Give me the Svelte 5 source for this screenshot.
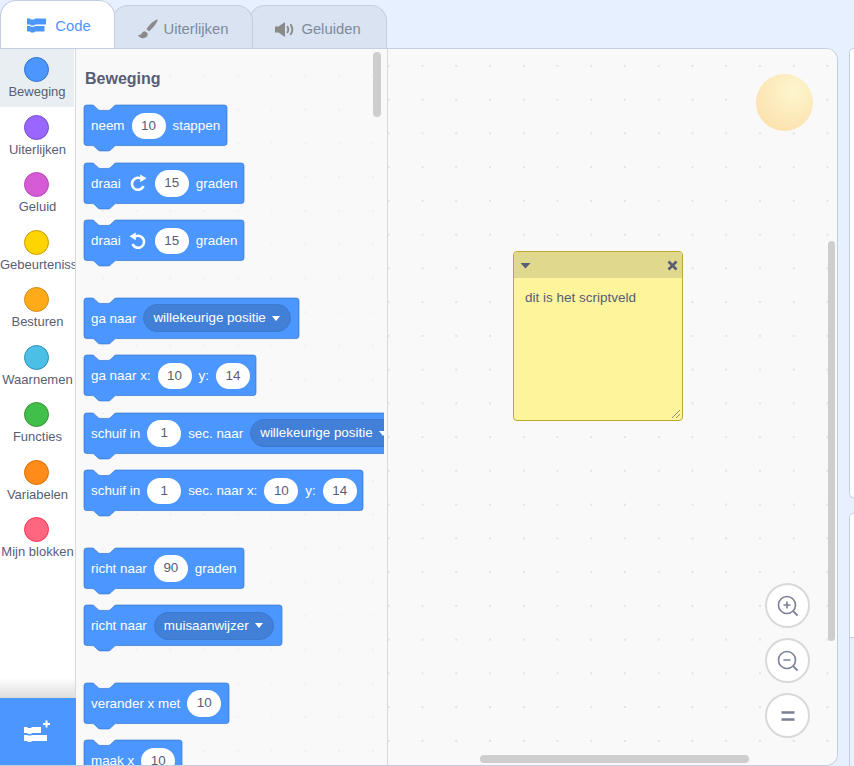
<script>
  const cats = [
    { name: 'Beweging', color: '#4c97ff', line: '#3373cc', active: true },
    { name: 'Uiterlijken', color: '#9966ff', line: '#774dcb' },
    { name: 'Geluid', color: '#d65cd6', line: '#bd42bd' },
    { name: 'Gebeurtenissen', color: '#ffd500', line: '#cc9900' },
    { name: 'Besturen', color: '#ffab19', line: '#cf8b17' },
    { name: 'Waarnemen', color: '#4cbfe6', line: '#2e8eb8' },
    { name: 'Functies', color: '#40bf4a', line: '#389438' },
    { name: 'Variabelen', color: '#ff8c1a', line: '#db6e00' },
    { name: 'Mijn blokken', color: '#ff6680', line: '#ff3355' }
  ]

  // t = text, n = number pill, d = dropdown, cw / ccw = turn icons
  const blocks = [
    { w: 143, parts: [['t', 'neem'], ['n', '10'], ['t', 'stappen']] },
    { w: 160, parts: [['t', 'draai'], ['cw'], ['n', '15'], ['t', 'graden']] },
    { w: 160, parts: [['t', 'draai'], ['ccw'], ['n', '15'], ['t', 'graden']], end: true },
    { w: 215, parts: [['t', 'ga naar'], ['d', 'willekeurige positie']] },
    { w: 172, parts: [['t', 'ga naar x:'], ['n', '10'], ['t', 'y:'], ['n', '14']] },
    { w: 330, parts: [['t', 'schuif in'], ['n', '1'], ['t', 'sec. naar'], ['d', 'willekeurige positie']] },
    { w: 279, parts: [['t', 'schuif in'], ['n', '1'], ['t', 'sec. naar x:'], ['n', '10'], ['t', 'y:'], ['n', '14']], end: true },
    { w: 160, parts: [['t', 'richt naar'], ['n', '90'], ['t', 'graden']] },
    { w: 198, parts: [['t', 'richt naar'], ['d', 'muisaanwijzer']], end: true },
    { w: 145, parts: [['t', 'verander x met'], ['n', '10']] },
    { w: 98, parts: [['t', 'maak x'], ['n', '10']] }
  ]

  function shape(w) {
    const W = w / 0.675
    return `M0 4A4 4 0 0 1 4 0H12c2 0 3 1 4 2l4 4c1 1 2 2 4 2h12c2 0 3-1 4-2l4-4c1-1 2-2 4-2H${W - 4}a4 4 0 0 1 4 4v52a4 4 0 0 1-4 4H48c-2 0-3 1-4 2l-4 4c-1 1-2 2-4 2H24c-2 0-3-1-4-2l-4-4c-1-1-2-2-4-2H4a4 4 0 0 1-4-4z`
  }
</script>

<div class="tabs">
  <div class="tab active">
    <svg width="19" height="15" viewBox="0 0 19 15">
      <path d="M0 .5h3l1 1h3l1-1h11v6H8l-1 1H4l-1-1H0zM0 8h3l1 .8h3l1-.8h9.500v5.500H8l-1 1H4l-1-1H0z" fill="#4c97ff"/>
    </svg>
    <span>Code</span>
  </div>
  <div class="tab second">
    <svg width="21" height="20" viewBox="0 0 21 20">
      <path d="M20 .5c-2.800.8-7.500 4.800-10.500 9.800l2.600 1.900c3.800-3.200 7.600-8 8.500-11 .1-.5-.1-.8-.6-.7z" fill="#8a8a8a"/>
      <path d="M7.800 12.200c-1.600.1-2.600 1-3.200 2.300-.6 1.100-1.800 1.600-3.600 1.600.8 2.300 3.300 3.600 5.800 3.100 2.800-.5 4.400-2.300 3.700-5.100z" fill="#8a8a8a"/>
    </svg>
    <span>Uiterlijken</span>
  </div>
  <div class="tab third">
    <svg width="19" height="15" viewBox="0 0 19 15">
      <path d="M0 4.500h3.500L10 0v15L3.500 10.500H0z" fill="#8a8a8a"/>
      <path d="M12.500 4.800c.9 1.500.9 3.900 0 5.400M15.800 2.800c1.800 2.700 1.800 6.700 0 9.400" fill="none" stroke="#8a8a8a" stroke-width="1.900" stroke-linecap="round"/>
    </svg>
    <span>Geluiden</span>
  </div>
</div>

<div class="body">
  <div class="editor">
    <div class="cats">
      <div class="cat-list">
        {#each cats as c}
          <div class="cat" class:selected={c.active}>
            <div class="dot" style="background:{c.color};border-color:{c.line}"></div>
            <div class="cat-name">{c.name}</div>
          </div>
        {/each}
      </div>
      <div class="ext">
        <svg width="26" height="23" viewBox="0 0 26 23">
          <path d="M0 7h3l1 1h3l1-1h9v6H8l-1 1H4l-1-1H0zM0 15h3l1 .5h3l1-.5h15v6H8l-1 1H4l-1-1H0z" fill="#fff"/>
          <path d="M19 3h2.500V.5h2V3H26v2h-2.500v2.500h-2V5H19z" fill="#fff"/>
        </svg>
      </div>
    </div>

    <div class="palette">
      <div class="pal-inner">
        <div class="pal-title">Beweging</div>
        {#each blocks as b}
          <div class="block" class:end={b.end} style="width:{b.w}px">
            <svg class="shape" width={b.w} height="48" viewBox="0 0 {b.w / 0.675} 71">
              <path d={shape(b.w)} fill="#4c97ff" stroke="#3373cc" stroke-width="1"/>
            </svg>
            {#each b.parts as p}
              {#if p[0] === 't'}
                <span class="label">{p[1]}</span>
              {:else if p[0] === 'n'}
                <span class="num">{p[1]}</span>
              {:else if p[0] === 'd'}
                <span class="drop">{p[1]}<i class="caret"></i></span>
              {:else}
                <svg class="turn" class:flip={p[0] === 'ccw'} width="20" height="18" viewBox="0 0 18 18">
                  <path d="M14.500 12A6 6 0 1 1 10.500 4H12" fill="none" stroke="#fff" stroke-width="2.600"/>
                  <path d="M17.500 4.300 11.200.4v7.800z" fill="#fff"/>
                </svg>
              {/if}
            {/each}
          </div>
        {/each}
      </div>
      <div class="pal-thumb"></div>
    </div>

    <div class="workspace">
      <div class="sun"></div>

      <div class="note">
        <div class="note-head">
          <svg width="11" height="7" viewBox="0 0 11 7"><path d="M.5 1h10L5.500 6.500z" fill="#575e75"/></svg>
          <svg width="11" height="11" viewBox="0 0 11 11"><path d="M1.500 1.500l8 8M9.500 1.500l-8 8" stroke="#575e75" stroke-width="2.600" fill="none"/></svg>
        </div>
        <div class="note-text">dit is het scriptveld</div>
        <svg class="grip" width="10" height="10" viewBox="0 0 10 10"><path d="M1 9l8-8M5 9l4-4" stroke="#8d8d7a" stroke-width="1" fill="none"/></svg>
      </div>

      <div class="zoom">
        <button aria-label="zoom in">
          <svg width="24" height="24" viewBox="0 0 24 24">
            <circle cx="11" cy="11" r="8.500" fill="none" stroke="#7b8097" stroke-width="1.600"/>
            <path d="M17.200 17.200l4.300 4.300" stroke="#7b8097" stroke-width="1.800"/>
            <path d="M7.500 11h7M11 7.500v7" stroke="#7b8097" stroke-width="1.600"/>
          </svg>
        </button>
        <button aria-label="zoom out">
          <svg width="24" height="24" viewBox="0 0 24 24">
            <circle cx="11" cy="11" r="8.500" fill="none" stroke="#7b8097" stroke-width="1.600"/>
            <path d="M17.200 17.200l4.300 4.300" stroke="#7b8097" stroke-width="1.800"/>
            <path d="M7.500 11h7" stroke="#7b8097" stroke-width="1.600"/>
          </svg>
        </button>
        <button aria-label="reset zoom">
          <svg width="24" height="24" viewBox="0 0 24 24">
            <path d="M5.500 8.500h13M5.500 15.500h13" stroke="#7b8097" stroke-width="2.600"/>
          </svg>
        </button>
      </div>

      <div class="scroll-v"></div>
      <div class="scroll-h"></div>
    </div>
  </div>

  <div class="side">
    <div class="stage"></div>
    <div class="targets">
      <div class="targets-top"></div>
    </div>
  </div>
</div>

<style>
  :global(body) {
    margin: 0;
    background: #e6f0ff;
    font-family: "Liberation Sans", Arial, sans-serif;
    overflow: hidden;
  }
  .tabs {
    display: flex;
    height: 48px;
    align-items: flex-end;
  }
  .tab {
    box-sizing: border-box;
    height: 43px;
    display: flex;
    align-items: center;
    gap: 7px;
    justify-content: center;
    background: #d9e3f2;
    border: 1px solid #c3cfe0;
    border-bottom: 0;
    border-radius: 16px 16px 0 0;
    color: #7d8a9c;
    font-size: 14.800px;
    position: relative;
  }
  .tab.active {
    width: 115px;
    height: 48px;
    background: #fff;
    color: #4c97ff;
    z-index: 3;
    padding-top: 2px;
    padding-left: 3px;
    gap: 9px;
  }
  .second {
    width: 141px;
    margin-left: -3px;
    z-index: 2;
    padding-top: 4px;
    gap: 6px;
  }
  .third {
    width: 138px;
    margin-left: -4px;
    z-index: 1;
    padding-top: 4px;
  }
  .body {
    display: flex;
    gap: 11px;
    height: 718px;
  }
  .editor {
    box-sizing: border-box;
    width: 838px;
    flex-shrink: 0;
    display: flex;
    height: 718px;
    border-top: 1px solid #c3cfe0;
    border-right: 1px solid #c3cfe0;
    border-bottom: 1px solid #c3cfe0;
    border-radius: 0 12px 12px 0;
    overflow: hidden;
    background: #f9f9f9;
  }
  .cats {
    width: 76px;
    flex-shrink: 0;
    display: flex;
    flex-direction: column;
    background: #fff;
    border-right: 1px solid #d9d9d9;
    box-sizing: border-box;
  }
  .cat-list {
    flex: 1;
    overflow: hidden;
    background: linear-gradient(to bottom, #fff 0, #fff calc(100% - 20px), #dcdcdc 100%);
  }
  .cat {
    height: 57.500px;
    box-sizing: border-box;
    padding-top: 8px;
    overflow: hidden;
  }
  .cat.selected {
    background: #e9eef2;
    margin-right: 1px;
  }
  .dot {
    box-sizing: border-box;
    width: 25px;
    height: 25px;
    border-radius: 50%;
    border: 1px solid;
    margin: 0 0 2px 24px;
  }
  .cat-name {
    font-size: 13px;
    line-height: 16px;
    color: #575e75;
    text-align: center;
    white-space: nowrap;
  }
  .ext {
    height: 67px;
    background: #4c97ff;
    display: flex;
    align-items: center;
    justify-content: center;
    margin-right: -1px;
  }
  .ext svg {
    margin-left: -3px;
  }
  .palette {
    width: 312px;
    flex-shrink: 0;
    box-sizing: border-box;
    border-right: 1px solid #d9d9d9;
    overflow: hidden;
    position: relative;
    background-color: #f9f9f9;
    background-image: radial-gradient(circle, #f0f0f0 1px, transparent 1.500px);
    background-size: 33.750px 33.750px;
    background-position: 10px 10px;
  }
  .pal-inner {
    box-sizing: border-box;
    width: 308px;
    height: 100%;
    padding: 21px 0 0 8px;
    overflow: hidden;
  }
  .pal-title {
    font-size: 16px;
    font-weight: 700;
    color: #575e75;
    line-height: 18px;
    margin: 0 0 17px 1px;
  }
  .block {
    position: relative;
    box-sizing: border-box;
    height: 40.500px;
    margin-bottom: 17px;
    padding: 1px 0 0 7px;
    display: flex;
    align-items: center;
    gap: 7px;
    color: #fff;
    font-size: 13.400px;
    white-space: nowrap;
  }
  .block.end {
    margin-bottom: 37px;
  }
  .shape {
    position: absolute;
    left: 0;
    top: 0;
    overflow: visible;
  }
  .label, .num, .drop, .turn {
    position: relative;
    flex-shrink: 0;
  }
  .num {
    width: 34px;
    height: 26.500px;
    border-radius: 14px;
    background: #fff;
    color: #575e75;
    text-align: center;
    line-height: 26.500px;
  }
  .drop {
    box-sizing: border-box;
    height: 28px;
    line-height: 26px;
    border-radius: 14px;
    background: #4280d7;
    border: 1px solid #3d78cf;
    padding: 0 10px 0 9px;
    display: flex;
    align-items: center;
    gap: 6px;
  }
  .caret {
    width: 0;
    height: 0;
    border-left: 4.500px solid transparent;
    border-right: 4.500px solid transparent;
    border-top: 5px solid #fff;
  }
  .flip {
    transform: scaleX(-1);
  }
  .pal-thumb {
    position: absolute;
    left: 297px;
    top: 3px;
    width: 8px;
    height: 65px;
    border-radius: 4px;
    background: #cecece;
  }
  .workspace {
    flex: 1;
    position: relative;
    background-color: #f9f9f9;
    background-image: radial-gradient(circle, #e2e2e2 .8px, transparent 1.300px);
    background-size: 33.750px 33.750px;
    background-position: 17.600px 0px;
  }
  .sun {
    position: absolute;
    left: 368px;
    top: 25px;
    width: 57px;
    height: 57px;
    border-radius: 50%;
    background: radial-gradient(circle at 65% 30%, #fdf6cf 0, #fce9b9 50%, #fbdca5 100%);
  }
  .note {
    position: absolute;
    left: 125px;
    top: 202px;
    box-sizing: border-box;
    width: 170px;
    height: 170px;
    background: #fef49c;
    border: 1px solid #bfa92f;
    border-radius: 4px;
    color: #575e75;
  }
  .note-head {
    height: 26px;
    background: #e0d98d;
    display: flex;
    justify-content: space-between;
    align-items: center;
    padding: 0 4px 0 6px;
    border-radius: 3px 3px 0 0;
  }
  .note-text {
    padding: 12px 11px;
    font-size: 13.500px;
    line-height: 15px;
  }
  .grip {
    position: absolute;
    right: 1px;
    bottom: 1px;
  }
  .zoom {
    position: absolute;
    left: 377px;
    top: 534px;
    display: flex;
    flex-direction: column;
    gap: 10px;
  }
  .zoom button {
    box-sizing: border-box;
    width: 45px;
    height: 45px;
    padding: 0;
    border-radius: 50%;
    background: #fff;
    border: 2.500px solid #d9d9d9;
    display: flex;
    align-items: center;
    justify-content: center;
  }
  .scroll-v {
    position: absolute;
    left: 440px;
    top: 192px;
    width: 7px;
    height: 400px;
    border-radius: 4px;
    background: #cecece;
  }
  .scroll-h {
    position: absolute;
    left: 92px;
    top: 706px;
    width: 269px;
    height: 8px;
    border-radius: 4px;
    background: #cecece;
  }
  .side {
    flex: 1;
    display: flex;
    flex-direction: column;
    gap: 15px;
  }
  .stage {
    height: 450px;
    background: #fff;
    border: 1px solid #c3cfe0;
    border-right: 0;
    border-radius: 8px 0 0 8px;
    box-sizing: border-box;
  }
  .targets {
    flex: 1;
    border-left: 1px solid #c3cfe0;
    border-top: 1px solid #c3cfe0;
    border-radius: 8px 0 0 0;
    overflow: hidden;
  }
  .targets-top {
    height: 123px;
    background: #fff;
    border-bottom: 1px solid #c3cfe0;
  }
</style>
